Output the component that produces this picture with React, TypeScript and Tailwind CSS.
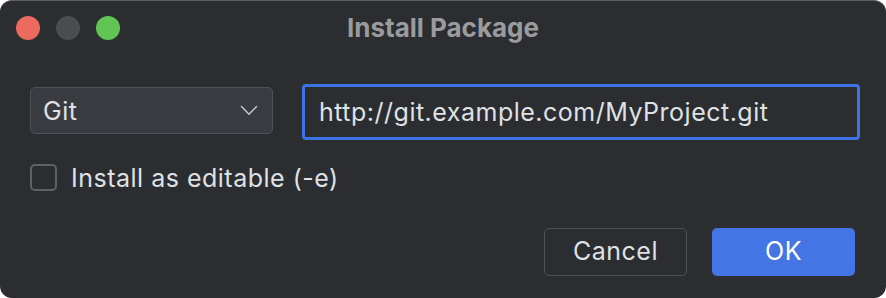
import React from "react";

export default function App() {
  const font = { fontFamily: "Inter, 'Noto Sans', sans-serif" };
  return (
    <div className="w-[886px] h-[298px] bg-white" style={font}>
      <div className="w-full h-full rounded-[12px] bg-[#2b2d30] border-t border-[#5c5e62] flex flex-col overflow-hidden">
        {/* title bar */}
        <div className="relative h-[52px] flex items-center">
          <div className="flex gap-[16px] pl-[16px] pt-[1px]">
            <div className="w-[24px] h-[24px] rounded-full bg-[#ed6a5e]" />
            <div className="w-[24px] h-[24px] rounded-full bg-[#4b4c4e]" />
            <div className="w-[24px] h-[24px] rounded-full bg-[#61c554]" />
          </div>
          <div className="absolute inset-0 flex items-center justify-center text-[26px] leading-[32px] font-bold text-[#9a9b9e] pt-[1px]">
            Install Package
          </div>
        </div>
        {/* row */}
        <div className="flex items-center pl-[30px] pr-[26px] mt-[31px] gap-[29px]">
          <div className="w-[243px] h-[47px] rounded-[5px] border border-[#4e5157] bg-[#393b40] flex items-center justify-between pl-[12px] pr-[14px] mt-[-3px]">
            <span className="text-[25px] leading-[30px] tracking-[0.5px] text-[#dfe1e5]">Git</span>
            <svg width="18" height="11" viewBox="0 0 18 11" fill="none">
              <path d="M1.5 1.5 L9 9.3 L16.5 1.5" stroke="#c4c6ca" strokeWidth="1.5" strokeLinecap="round" strokeLinejoin="round" />
            </svg>
          </div>
          <div className="flex-1 h-[56px] rounded-[4px] border-[3px] border-[#3d73e7] bg-[#2b2d30] flex items-center pl-[14px]">
            <span className="text-[25px] leading-[30px] tracking-[0.5px] text-[#dfe1e5]">http://git.example.com/MyProject.git</span>
          </div>
        </div>
        {/* checkbox */}
        <div className="flex items-center h-[27px] pl-[30px] mt-[24px] gap-[14px]">
          <div className="w-[27px] h-[27px] rounded-[5px] border-[2px] border-[#5f6166]" />
          <span className="text-[25px] leading-[30px] tracking-[0.5px] text-[#dfe1e5]">Install as editable (-e)</span>
        </div>
        {/* buttons */}
        <div className="flex justify-end gap-[25px] pr-[31px] mt-[37px]">
          <div className="w-[143px] h-[48px] rounded-[5px] border border-[#4e5157] flex items-center justify-center text-[25px] tracking-[0.5px] text-[#dfe1e5]">
            Cancel
          </div>
          <div className="w-[143px] h-[48px] rounded-[5px] bg-[#4574e4] flex items-center justify-center text-[25px] tracking-[0.5px] text-white">
            OK
          </div>
        </div>
      </div>
    </div>
  );
}
